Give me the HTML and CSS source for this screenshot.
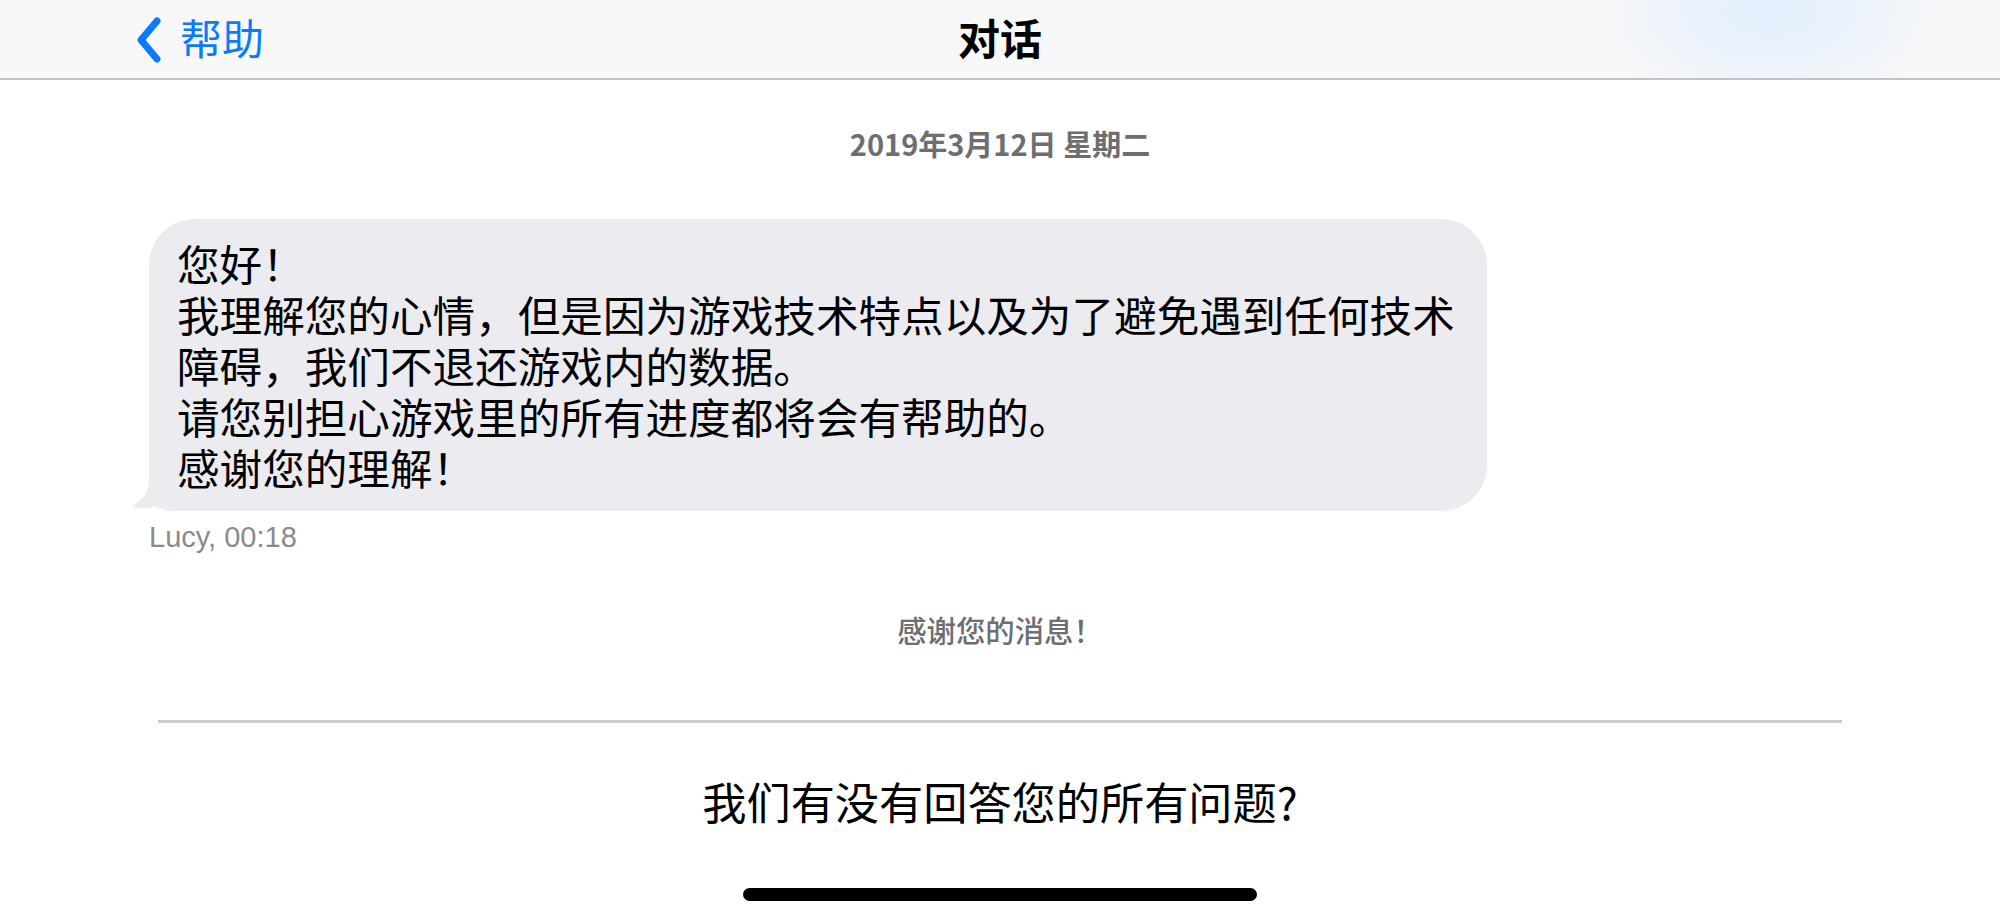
FILE: index.html
```html
<!DOCTYPE html>
<html lang="zh-CN">
<head>
  <meta charset="UTF-8">
  <meta name="viewport" content="width=device-width, initial-scale=1.0">
  <title>对话</title>
  <link rel="stylesheet" href="styles.css">
</head>
<body>

  <!-- Navigation Bar -->
  <header class="nav-bar">
    <a class="nav-back" href="#">
      <svg class="nav-chevron" viewBox="0 0 26 46" width="26" height="46">
        <path d="M21 4 L5 23 L21 42" fill="none" stroke="#0a7aff" stroke-width="7" stroke-linecap="round" stroke-linejoin="round"/>
      </svg>
      <span>帮助</span>
    </a>
    <h1 class="nav-title">对话</h1>
    <div class="nav-side"></div>
  </header>

  <main class="chat">
    <p class="chat-date">2019年3月12日 星期二</p>

    <div class="message">
      <div class="bubble">
        <svg class="bubble-tail" viewBox="0 0 70 60" width="70" height="60">
          <path d="M18 0 H70 V60 H45 C36 60 29 58 24 55 C18 58 9 58 1 55 C11 49 18 42 18 30 Z" fill="#ebebf0"/>
        </svg>
        <p class="bubble-text">您好！<br>我理解您的心情，但是因为游戏技术特点以及为了避免遇到任何技术<br>障碍，我们不退还游戏内的数据。<br>请您别担心游戏里的所有进度都将会有帮助的。<br>感谢您的理解！</p>
      </div>
      <p class="message-meta">Lucy, 00:18</p>
    </div>

    <p class="chat-note">感谢您的消息！</p>

    <hr class="divider">

    <p class="question">我们有没有回答您的所有问题?</p>

    <div class="home-indicator"></div>
  </main>

</body>
</html>
```

FILE: styles.css
```css
/* General Reset */
* {
  margin: 0;
  padding: 0;
  box-sizing: border-box;
}

body {
  font-family: "Noto Sans CJK SC", "Noto Sans", sans-serif;
  background: #fff;
  color: #000;
  width: 2000px;
  height: 923px;
  overflow: hidden;
}

/* Navigation Bar */
.nav-bar {
  height: 80px;
  display: grid;
  grid-template-columns: 1fr auto 1fr;
  align-items: center;
  background: radial-gradient(ellipse 190px 110px at 1770px 10px, #e2effe 0%, rgba(232, 240, 252, 0.6) 55%, rgba(248, 248, 248, 0) 100%), #f8f8f8;
  border-bottom: 2px solid #c4c4c6;
}

.nav-back {
  display: flex;
  align-items: center;
  gap: 18px;
  padding-left: 136px;
  color: #0a7aff;
  text-decoration: none;
  font-size: 42px;
  line-height: 1;
}

.nav-chevron {
  display: block;
  margin-top: 2px;
}

.nav-back span {
  margin-top: -4px;
}

.nav-title {
  font-size: 42px;
  font-weight: 700;
  line-height: 1;
  margin-top: -4px;
}

/* Chat area */
.chat {
  display: flex;
  flex-direction: column;
}

.chat-date {
  margin-top: 43px;
  text-align: center;
  font-size: 29px;
  line-height: 40px;
  font-weight: 700;
  color: #6d6d72;
}

.message {
  margin-top: 56px;
  padding-left: 149px;
}

.bubble {
  position: relative;
  display: inline-block;
  background: #ebebf0;
  border-radius: 46px;
  padding: 18px 32px 19px 28px;
}

.bubble-tail {
  position: absolute;
  left: -18px;
  bottom: 0;
}

.bubble-text {
  position: relative;
  font-size: 42.6px;
  line-height: 51px;
  color: #000;
}

.message-meta {
  margin-top: 9px;
  font-family: "Liberation Sans", Arial, sans-serif;
  font-size: 29px;
  line-height: 34px;
  color: #8a8a8e;
}

.chat-note {
  margin-top: 55px;
  text-align: center;
  font-size: 29.4px;
  line-height: 40px;
  font-weight: 500;
  color: #6d6d72;
}

.divider {
  margin: 71px 158px 0;
  border: none;
  height: 3px;
  background: #cbcbd0;
}

.question {
  margin-top: 48px;
  text-align: center;
  font-size: 44.2px;
  line-height: 60px;
}

.home-indicator {
  align-self: center;
  margin-top: 57px;
  width: 514px;
  height: 13px;
  border-radius: 7px;
  background: #000;
}
```
